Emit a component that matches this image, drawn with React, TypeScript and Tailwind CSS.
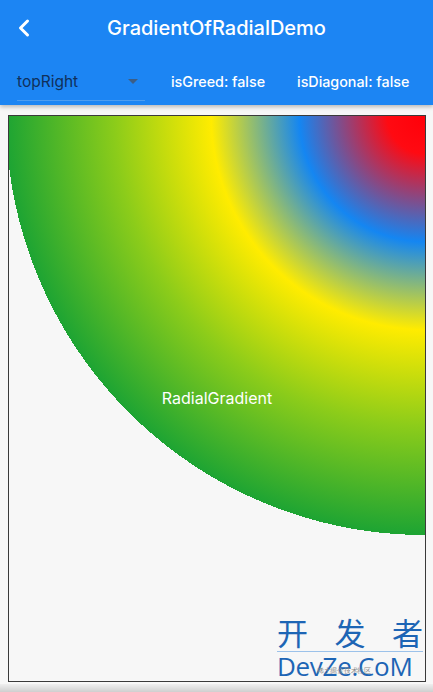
import { ChevronLeft } from "lucide-react";

export default function App() {
  return (
    <div className="flex h-[692px] w-[433px] flex-col overflow-hidden bg-[#f7f7f7] font-['Inter',sans-serif]">
      {/* APP BAR */}
      <div className="relative z-10 flex h-[105px] flex-col bg-[#1c85f3] shadow-[0_2px_4px_rgba(0,0,0,0.25)]">
        <div className="flex h-[56px] items-center">
          <ChevronLeft className="ml-[10px] h-7 w-7 text-white" strokeWidth={2.6} />
          <div className="flex-1 pr-[38px] text-center text-[20px] font-medium text-white">
            GradientOfRadialDemo
          </div>
        </div>
        <div className="flex items-center pl-[17px] pt-[14px]">
          <div className="flex w-[128px] items-center justify-between border-b border-[#4d9df0] pb-[7px]">
            <span className="text-[15.5px] text-[#10305a]">topRight</span>
            <svg width="10" height="6" viewBox="0 0 10 6" className="mr-[7px]">
              <path d="M0 0h10L5 5z" fill="#3c5e86" />
            </svg>
          </div>
          <span className="ml-[26px] pb-[7px] text-[14.3px] font-medium text-white">isGreed: false</span>
          <span className="ml-[32px] pb-[7px] text-[14.3px] font-medium text-white">isDiagonal: false</span>
        </div>
      </div>

      {/* BODY */}
      <div className="relative ml-[8px] mr-[7px] mt-[10px] flex h-[570px] items-center justify-center border border-[#3a3a3a] bg-[radial-gradient(circle_419px_at_100%_0%,#ff0009_0%,#ff0a12_9%,#1486f2_30%,#ffec00_51%,#8ccc1a_74%,#1da433_100%,transparent_100%)]">
        <span className="text-[16px] text-white">RadialGradient</span>

        {/* WATERMARK */}
        <div className="absolute bottom-[1px] right-[2px] flex w-[146px] flex-col items-stretch">
          <div className="flex justify-between text-[31px] leading-[34px] text-[#1d65b5] font-['Noto_Sans_CJK_SC',sans-serif]">
            <span>开</span>
            <span>发</span>
            <span>者</span>
          </div>
          <div className="mt-[2px] border-t border-[#9cc2ea]" />
          <div className="relative whitespace-nowrap text-[26px] leading-[28px] text-[#1d65b5] font-['Open_Sans',sans-serif] tracking-[-0.3px]">
            DevZe.CoM
            <span className="absolute left-[40px] top-[14px] text-[7px] leading-[9px] text-[#8a8a8a]">
              稀土掘金技术社区
            </span>
          </div>
        </div>
      </div>
      <div className="mt-[2px] h-[8px] bg-gradient-to-b from-[#efefef] to-[#cfcfcf]" />
    </div>
  );
}
